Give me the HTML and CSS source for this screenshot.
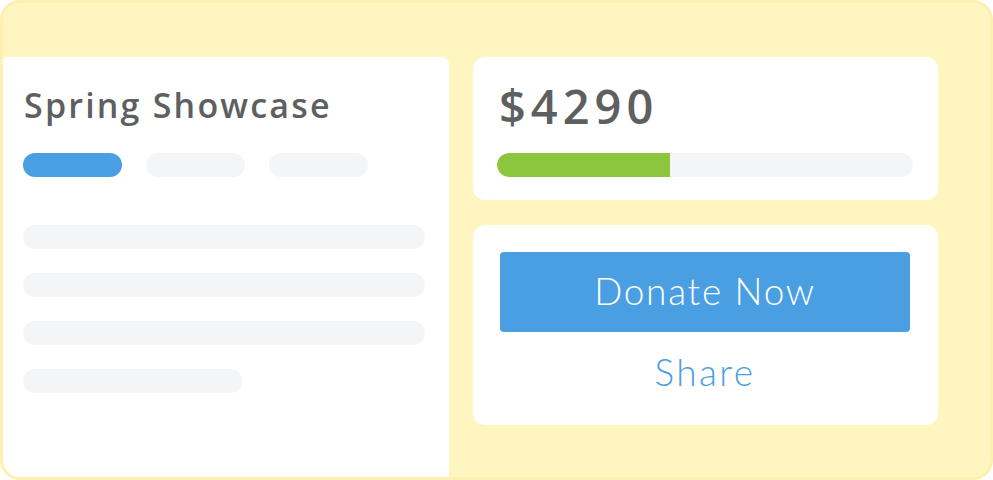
FILE: index.html
```html
<!DOCTYPE html>
<html>
<head>
<meta charset="utf-8">
<link rel="stylesheet" href="styles.css">
</head>
<body>
<div class="frame">
  <section class="campaign">
    <h1 class="title">Spring Showcase</h1>
    <div class="tabs">
      <span class="tab tab-active"></span>
      <span class="tab"></span>
      <span class="tab"></span>
    </div>
    <div class="lines">
      <span class="line"></span>
      <span class="line"></span>
      <span class="line"></span>
      <span class="line line-short"></span>
    </div>
  </section>
  <aside class="side">
    <div class="card card-amount">
      <div class="amount">$4290</div>
      <div class="progress"><div class="progress-fill" style="width:41.6%"></div></div>
    </div>
    <div class="card card-actions">
      <button class="donate">Donate Now</button>
      <a class="share">Share</a>
    </div>
  </aside>
</div>
</body>
</html>
```
FILE: styles.css
```css
html, body {
  margin: 0;
  padding: 0;
  background: #ffffff;
}
body {
  font-family: "Lato", "Open Sans", sans-serif;
}
.frame {
  box-sizing: border-box;
  width: 993px;
  height: 480px;
  background: #fef5c1;
  border: 3px solid #fdf0b0;
  border-radius: 20px;
  padding-top: 54px;
  display: flex;
  align-items: flex-start;
  overflow: hidden;
}
.campaign {
  box-sizing: border-box;
  width: 446px;
  height: 420px;
  background: #ffffff;
  border-radius: 4px 8px 0 17px;
  padding: 28px 20px 0 20px;
}
.title {
  margin: 0;
  font-family: "Open Sans", sans-serif;
  font-weight: 600;
  font-size: 34px;
  line-height: 40px;
  color: #5e5f61;
  letter-spacing: 2.2px;
  padding-left: 1px;
}
.tabs {
  display: flex;
  gap: 24px;
  margin-top: 28px;
}
.tab {
  display: block;
  width: 99px;
  height: 24px;
  border-radius: 12px;
  background: #f4f5f6;
}
.tab-active {
  background: #4a9fe2;
}
.lines {
  display: flex;
  flex-direction: column;
  gap: 24px;
  margin-top: 48px;
}
.line {
  display: block;
  width: 402px;
  height: 24px;
  border-radius: 12px;
  background: #f4f5f6;
}
.line-short {
  width: 219px;
}
.side {
  margin-left: 24px;
  width: 465px;
  display: flex;
  flex-direction: column;
  gap: 25px;
}
.card {
  box-sizing: border-box;
  background: #ffffff;
  border-radius: 12px;
}
.card-amount {
  height: 143px;
  padding: 24px 25px 0 24px;
}
.amount {
  font-family: "Open Sans", sans-serif;
  font-weight: 600;
  font-size: 47px;
  line-height: 50px;
  color: #5e5f61;
  padding-left: 2px;
  letter-spacing: 5px;
}
.progress {
  margin-top: 22px;
  height: 24px;
  border-radius: 12px;
  background: #f4f5f6;
  overflow: hidden;
}
.progress-fill {
  height: 100%;
  background: #8cc63f;
  border-radius: 12px 0 0 12px;
}
.card-actions {
  height: 200px;
  padding: 27px 28px 0 27px;
  display: flex;
  flex-direction: column;
  align-items: stretch;
}
.donate {
  height: 80px;
  border: none;
  border-radius: 4px;
  background: #4a9fe2;
  color: #ffffff;
  font-family: "Lato", sans-serif;
  font-weight: 300;
  font-size: 37px;
  letter-spacing: 1.7px;
  padding: 0 0 3px 0;
}
.share {
  display: block;
  text-align: center;
  margin-top: 18px;
  color: #4a9fe2;
  font-family: "Lato", sans-serif;
  font-weight: 300;
  font-size: 37px;
  line-height: 44px;
  letter-spacing: 2.4px;
}
```
